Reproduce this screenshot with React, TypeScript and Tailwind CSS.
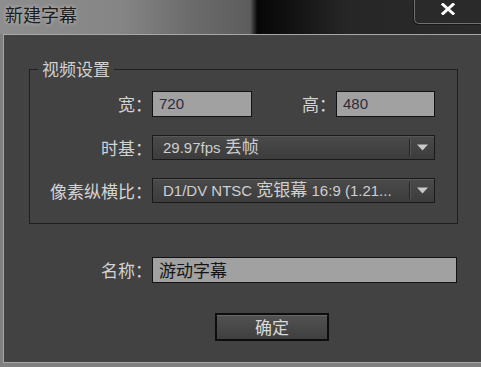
export default function App() {
  const cjk = "font-['Noto_Sans_CJK_SC',sans-serif]";
  const latin = "font-['Liberation_Sans','Noto_Sans_CJK_SC',sans-serif]";
  const label = `${cjk} text-[17px] leading-[20px] text-[#d3d3d3] text-right shrink-0`;
  const field =
    "h-[26px] bg-[#a1a1a1] border border-[#121212] flex items-center pl-[6px] shrink-0";
  const arrow = (
    <div className="w-[25px] h-full flex items-center shrink-0">
      <div className="w-px h-[17px] bg-[#262626] shadow-[1px_0_0_#555]" />
      <div className="flex-1 flex items-center justify-center">
        <svg width="11" height="7" viewBox="0 0 11 7">
          <path d="M0 0.5 L11 0.5 L5.5 6.5 Z" fill="#c9c9c9" />
        </svg>
      </div>
    </div>
  );
  const dropdown =
    "w-[283px] h-[25px] border border-[#1a1a1a] bg-[linear-gradient(to_bottom,#4a4a4a,#3c3c3c)] shadow-[inset_0_1px_0_#575757] flex items-center shrink-0";

  return (
    <div className="w-[481px] h-[367px] overflow-hidden bg-[#808080] flex flex-col">
      {/* title bar */}
      <div className="h-[34px] shrink-0 flex items-start justify-between bg-[linear-gradient(to_right,#8e8e8e_0%,#858585_25%,#6c6c6c_39%,#5d5d5d_52%,#070707_53.5%,#141414_62%,#262626_72%,#2b2b2b_100%)]">
        <span
          className={`${cjk} ml-[5px] mt-[2px] text-[18px] leading-[24px] text-[#1c1c1c] [text-shadow:0_0_4px_rgba(255,255,255,0.55)]`}
        >
          新建字幕
        </span>
        <div className="w-[67px] h-[24px] border-l border-b border-[#6f6f6f] rounded-bl-[5px] bg-[#2a2a2a] shadow-[-1px_1px_0_#181818] flex justify-center pt-[3px]">
          <svg width="14" height="12" viewBox="0 0 14 12">
            <path
              d="M2 1.5 L12 10.5 M12 1.5 L2 10.5"
              stroke="#ffffff"
              strokeWidth="3"
              strokeLinecap="square"
            />
          </svg>
        </div>
      </div>

      {/* panel */}
      <div className="ml-[3px] h-[329px] shrink-0 border-l border-t border-b border-[#a8a8a8] bg-[#424242] flex flex-col">
        <fieldset className="ml-[25px] mt-[25px] w-[429px] border border-[#1f1f1f] pt-[13px] pb-[20px]">
          <legend className={`${cjk} ml-[8px] px-[4px] text-[17px] leading-[18px] text-[#d0d0d0]`}>
            视频设置
          </legend>

          <div className="flex items-center h-[26px]">
            <span className={`${label} w-[122px]`}>宽：</span>
            <div className={`${field} w-[100px]`}>
              <span className={`${latin} text-[15px] leading-[18px] text-[#2c2b38]`}>720</span>
            </div>
            <span className={`${label} w-[84px]`}>高：</span>
            <div className={`${field} w-[99px]`}>
              <span className={`${latin} text-[15px] leading-[18px] text-[#2c2b38]`}>480</span>
            </div>
          </div>

          <div className="flex items-center h-[25px] mt-[18px]">
            <span className={`${label} w-[122px]`}>时基：</span>
            <div className={dropdown}>
              <div className={`${latin} flex-1 pl-[10px] text-[15px] leading-[20px] text-[#cfcfcf] whitespace-nowrap overflow-hidden`}>
                29.97fps <span className="text-[17px]">丢帧</span>
              </div>
              {arrow}
            </div>
          </div>

          <div className="flex items-center h-[25px] mt-[18px]">
            <span className={`${label} w-[122px]`}>像素纵横比：</span>
            <div className={dropdown}>
              <div className={`${latin} flex-1 pl-[10px] text-[15px] leading-[20px] text-[#cfcfcf] whitespace-nowrap overflow-hidden`}>
                D1/DV NTSC <span className="text-[17px]">宽银幕</span> 16:9 (1.21...
              </div>
              {arrow}
            </div>
          </div>
        </fieldset>

        <div className="flex items-center h-[25px] mt-[33px]">
          <span className={`${label} w-[148px]`}>名称：</span>
          <div className={`${field} w-[305px] h-[25px]`}>
            <span className={`${cjk} text-[17px] leading-[20px] text-[#141414]`}>游动字幕</span>
          </div>
        </div>

        <div className="mt-[31px] ml-[211px] w-[114px] h-[28px] border-2 border-[#0d0d0d] bg-[linear-gradient(to_bottom,#525252,#3f3f3f)] shadow-[inset_0_1px_0_#666] flex items-center justify-center">
          <span className={`${cjk} text-[17px] leading-[20px] text-[#d9d9d9]`}>确定</span>
        </div>
      </div>
    </div>
  );
}
